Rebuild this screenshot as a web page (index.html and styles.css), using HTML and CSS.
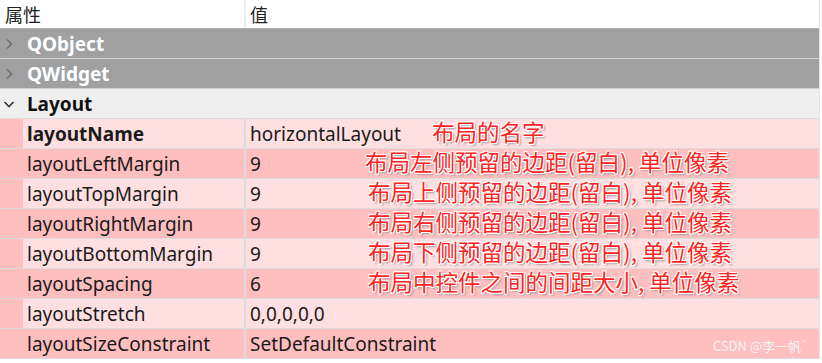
FILE: index.html
```html
<!DOCTYPE html>
<html lang="zh-CN">
<head>
    <meta charset="UTF-8">
    <title>属性编辑器 - Layout</title>
    <link rel="stylesheet" href="styles.css">
</head>
<body>
    <div class="editor">
        <div class="head">
            <div class="head-name">属性</div>
            <div class="head-value">值</div>
        </div>

        <div class="group closed">
            <svg class="arrow" viewBox="0 0 12 12"><path d="M4 1.5 L8.5 6 L4 10.5"/></svg>QObject
        </div>
        <div class="group closed">
            <svg class="arrow" viewBox="0 0 12 12"><path d="M4 1.5 L8.5 6 L4 10.5"/></svg>QWidget
        </div>
        <div class="group open">
            <svg class="arrow" viewBox="0 0 12 12"><path d="M1.5 4 L6 8.5 L10.5 4"/></svg>Layout
        </div>

        <div class="prop light">
            <div class="name bold">layoutName</div>
            <div class="value">horizontalLayout<span class="note note-a">布局的名字</span></div>
        </div>
        <div class="prop dark">
            <div class="name">layoutLeftMargin</div>
            <div class="value">9<span class="note note-b">布局左侧预留的边距(留白), 单位像素</span></div>
        </div>
        <div class="prop light">
            <div class="name">layoutTopMargin</div>
            <div class="value">9<span class="note note-c">布局上侧预留的边距(留白), 单位像素</span></div>
        </div>
        <div class="prop dark">
            <div class="name">layoutRightMargin</div>
            <div class="value">9<span class="note note-c">布局右侧预留的边距(留白), 单位像素</span></div>
        </div>
        <div class="prop light">
            <div class="name">layoutBottomMargin</div>
            <div class="value">9<span class="note note-c">布局下侧预留的边距(留白), 单位像素</span></div>
        </div>
        <div class="prop dark">
            <div class="name">layoutSpacing</div>
            <div class="value">6<span class="note note-c">布局中控件之间的间距大小, 单位像素</span></div>
        </div>
        <div class="prop light">
            <div class="name">layoutStretch</div>
            <div class="value">0,0,0,0,0</div>
        </div>
        <div class="prop dark">
            <div class="name">layoutSizeConstraint</div>
            <div class="value">SetDefaultConstraint<span class="mark">CSDN @李一帆`</span></div>
        </div>
    </div>
</body>
</html>
```

FILE: styles.css
```css
:root { --pink: #ffbfbf; --pink-light: #ffdfdf; --line: #dcdcdc; --name-w: 246px; }
body { margin: 0; background: #fff; font-family: "Noto Sans", "Noto Sans CJK SC", sans-serif; font-size: 19px; color: #1a1a1a; }
.editor { width: 819px; border-right: 1px solid #e4e4e4; }

.head { display: flex; height: 28px; line-height: 28px; background: #fff; border-bottom: 1px solid #b4b4b4; font-family: "Noto Sans CJK SC", sans-serif; font-size: 18px; color: #222; }
.head-name { width: var(--name-w); padding-left: 5px; box-sizing: border-box; border-right: 2px solid #ececec; }
.head-value { padding-left: 4px; }

.group { height: 30px; line-height: 29px; border-bottom: 1px solid #d2d2d2; font-weight: bold; display: flex; align-items: center; padding-top: 1px; box-sizing: border-box; }
.group.closed { background: #a0a0a0; color: #fff; text-shadow: 0 0 1px #8fa6c0; }
.group.open { background: #efefef; color: #111; border-bottom-color: #dcdcdc; }
.arrow { width: 12px; height: 12px; margin: 0 12px 0 3px; fill: none; stroke: #6e6e6e; stroke-width: 1.6; }
.group.open .arrow { stroke: #333; }

.prop { display: flex; height: 29px; line-height: 31px; border-bottom: 1px solid var(--line); }
.prop.light { background: var(--pink-light); }
.prop.dark { background: var(--pink); }
.name { width: var(--name-w); box-sizing: border-box; padding-left: 4px; border-left: 23px solid var(--pink); border-right: 2px solid var(--line); }
.bold { font-weight: bold; }
.value { flex: 1; padding-left: 4px; position: relative; }

.note { position: absolute; top: -2px; line-height: 29px; font-family: "Noto Sans CJK SC", sans-serif; font-size: 22.5px; color: #ff2323; white-space: nowrap;
        text-shadow: 1px 1px 0 #fff, -1px -1px 0 #fff, 1px -1px 0 #fff, -1px 1px 0 #fff, 0 1px 0 #fff, 0 -1px 0 #fff, 2px 2px 2px #9a9a9a; }
.note-a { left: 186px; }
.note-b { left: 119px; }
.note-c { left: 122px; }

.mark { position: absolute; right: 10px; top: 1px; font-family: "Noto Sans CJK SC", sans-serif; font-size: 13px; color: #f4f4f4; }
```
